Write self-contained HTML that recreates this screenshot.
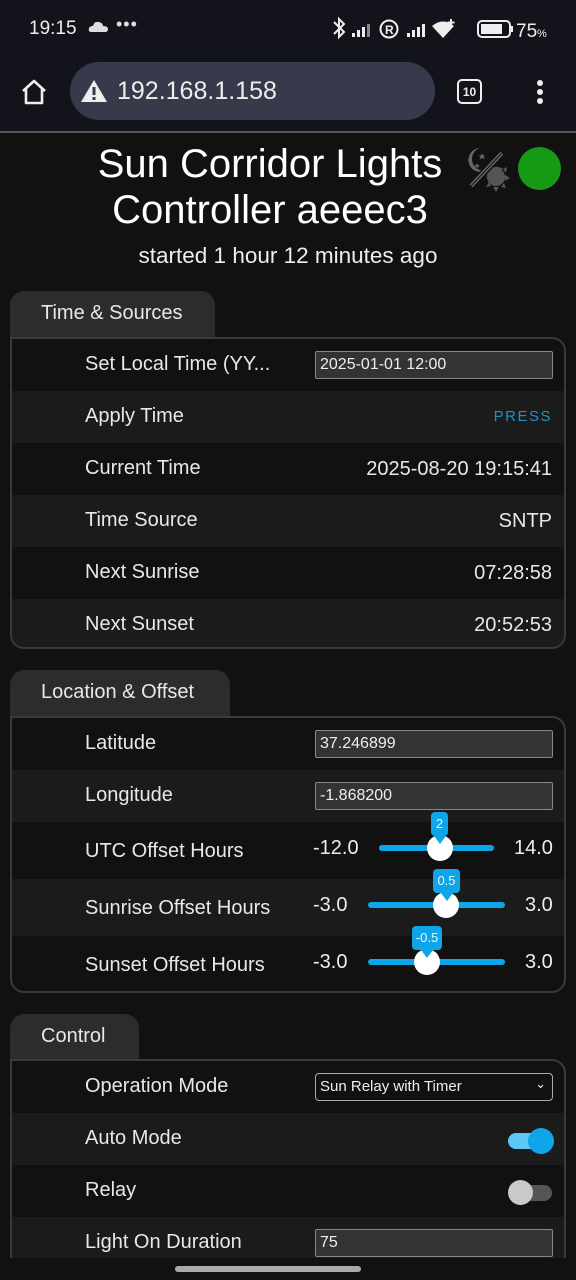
<!DOCTYPE html>
<html style="width:576px;height:1280px;overflow:hidden"><head><meta charset="utf-8"><style>
*{margin:0;padding:0;box-sizing:border-box}
body{width:576px;height:1280px;background:#111;font-family:"Liberation Sans",sans-serif;color:#eee;position:relative;overflow:hidden}
.a{position:absolute}
.sb{left:0;top:0;width:576px;height:132px;background:#13141b}
.lbl{position:absolute;left:85px;font-size:20px;color:#e8e8e8}
.val{position:absolute;right:24px;font-size:20px;color:#e8e8e8}
.tab{position:absolute;left:10px;height:47px;background:#2c2c2c;border-radius:14px 14px 0 0;font-size:20px;color:#e8e8e8;padding:11px 0 0 31px}
.card{position:absolute;left:10px;width:556px;border:2px solid #3a3a3a;border-radius:0 14px 14px 14px;overflow:hidden}
.row{position:relative;height:52px}
.row.alt{background:#1b1b1b}
.row .lbl{top:14px;left:73px}
.row .val{right:12px;top:15px}
.inp{position:absolute;left:303px;width:238px;height:28px;top:12px;background:#333;border:1px solid #888;border-radius:2px;font-size:16px;color:#eee;padding:4px 0 0 4px}
.trk{position:absolute;height:6px;background:#0ea5e9;border-radius:3px}
.th{position:absolute;width:26px;height:26px;border-radius:50%;background:#fff}
.bub{position:absolute;height:24px;background:#0ea5e9;border-radius:4px;font-size:13px;color:#e8f6ff;text-align:center;padding-top:4px}
.bub:after{content:"";position:absolute;left:50%;margin-left:-6px;bottom:-8px;border:6px solid transparent;border-top:8px solid #0ea5e9;border-bottom:0}
</style></head><body>
<div class="a sb"></div>
<div class="a" style="left:29px;top:18px;font-size:19px;color:#eee">19:15</div>
<svg class="a" style="left:88px;top:20px" width="22" height="14"><path d="M3 12 Q0 12 1 8 Q2 6 5 6 Q6 1 11 2 Q15 3 15 6 Q20 6 20 9 Q20 12 17 12Z" fill="#ddd"/></svg>
<div class="a" style="left:116px;top:14px;font-size:18px;color:#ddd;letter-spacing:1px">•••</div>
<svg class="a" style="left:330px;top:16px" width="222" height="24">
<path d="M4 6 L14 16 L9 21 L9 3 L14 8 L4 18" stroke="#eee" stroke-width="2" fill="none"/>
<g fill="#eee"><rect x="22" y="17" width="3" height="4"/><rect x="27" y="14" width="3" height="7"/><rect x="32" y="11" width="3" height="10"/><rect x="37" y="8" width="3" height="13" fill="#888"/></g>
<circle cx="59" cy="13" r="8.5" stroke="#eee" stroke-width="2" fill="none"/><text x="55" y="18" font-size="12" fill="#eee" font-family="Liberation Sans" font-weight="bold">R</text>
<g fill="#eee"><rect x="77" y="17" width="3" height="4"/><rect x="82" y="14" width="3" height="7"/><rect x="87" y="11" width="3" height="10"/><rect x="92" y="8" width="3" height="13"/></g>
<path d="M102 10 Q113 1 124 10 L113 22Z" fill="#eee"/><path d="M121 3 v7 M117.5 6.5 h7" stroke="#eee" stroke-width="2"/>
<rect x="148" y="5" width="32" height="16" rx="4" stroke="#eee" stroke-width="2" fill="none"/><rect x="151" y="8" width="21" height="10" fill="#eee"/><rect x="181" y="10" width="2" height="6" fill="#eee"/>
<text x="186" y="21" font-size="19" fill="#eee" font-family="Liberation Sans">75</text><text x="207" y="21" font-size="11" fill="#eee" font-family="Liberation Sans">%</text>
</svg>
<svg class="a" style="left:20px;top:78px" width="30" height="28"><path d="M3 13 L14 3 L25 13 M6 11 V25 H22 V11" stroke="#eee" stroke-width="2.6" fill="none" stroke-linejoin="round"/></svg>
<div class="a" style="left:70px;top:62px;width:365px;height:58px;border-radius:29px;background:#363a4a"></div>
<svg class="a" style="left:80px;top:79px" width="28" height="24"><path d="M14 1 L27 23 H1Z" fill="#eee"/><rect x="12.5" y="8" width="3" height="8" fill="#363a4a"/><rect x="12.5" y="18" width="3" height="3" fill="#363a4a"/></svg>
<div class="a" style="left:117px;top:77px;font-size:25px;color:#eee">192.168.1.158</div>
<div class="a" style="left:457px;top:79px;width:25px;height:25px;border:2.5px solid #eee;border-radius:5px;font-size:12px;font-weight:bold;text-align:center;padding-top:4px;color:#eee">10</div>
<div class="a" style="left:537px;top:80px;width:6px;height:6px;border-radius:50%;background:#eee;box-shadow:0 9px 0 #eee,0 18px 0 #eee"></div>
<div class="a" style="left:0;top:131px;width:576px;height:2px;background:#555"></div>

<div class="a" style="left:0;width:540px;top:141px;text-align:center;font-size:40px;line-height:46px;color:#fff">Sun Corridor Lights<br>Controller aeeec3</div>
<svg class="a" style="left:465px;top:145px" width="48" height="48">
<path d="M15 3 A12 12 0 1 0 22 25 A10 10 0 1 1 15 3Z" fill="#666"/>
<path d="M17 8 l1 2.5 2.5 0 -2 1.5 1 2.5 -2.5 -1.5 -2.5 1.5 1 -2.5 -2 -1.5 2.5 0Z M12 18 l.8 2 2 0 -1.6 1.2 .8 2 -2 -1.2 -2 1.2 .8 -2 -1.6 -1.2 2 0Z" fill="#666"/>
<path d="M22 34 A10 10 0 0 1 38 24 Z" fill="#555"/><circle cx="31" cy="32" r="9" fill="#555"/>
<path d="M45 33 l-5 -3 v6Z M31 47 l-3 -5 h6Z M41 43 l-5 -1 l3 -4Z M42 22 l-4 2 l3 4Z M21 42 l5 -1 l-2 -4Z" fill="#555"/>
<path d="M6 41 L37 8" stroke="#111" stroke-width="7"/><path d="M6 41 L37 8" stroke="#666" stroke-width="4"/><path d="M6 41 L37 8" stroke="#111" stroke-width="1"/></svg>
<div class="a" style="left:518px;top:147px;width:43px;height:43px;border-radius:50%;background:#169a16"></div>
<div class="a" style="left:0;width:576px;top:243px;text-align:center;font-size:22.5px;color:#eee">started 1 hour 12 minutes ago</div>

<div class="tab" style="top:291px;width:205px">Time &amp; Sources</div>
<div class="card" style="top:337px;height:312px">
<div class="row"><span class="lbl">Set Local Time (YY...</span><div class="inp">2025-01-01 12:00</div></div>
<div class="row alt"><span class="lbl">Apply Time</span><span class="val" style="font-size:15px;color:#1e90c8;letter-spacing:1.5px;top:17px">PRESS</span></div>
<div class="row"><span class="lbl">Current Time</span><span class="val">2025-08-20 19:15:41</span></div>
<div class="row alt"><span class="lbl">Time Source</span><span class="val">SNTP</span></div>
<div class="row"><span class="lbl">Next Sunrise</span><span class="val">07:28:58</span></div>
<div class="row alt"><span class="lbl">Next Sunset</span><span class="val">20:52:53</span></div>
</div>

<div class="tab" style="top:670px;width:220px">Location &amp; Offset</div>
<div class="card" style="top:716px;height:277px">
<div class="row"><span class="lbl">Latitude</span><div class="inp">37.246899</div></div>
<div class="row alt"><span class="lbl">Longitude</span><div class="inp">-1.868200</div></div>
<div class="row" style="height:57px"><span class="lbl" style="top:18px">UTC Offset Hours</span></div>
<div class="row alt" style="height:57px"><span class="lbl" style="top:18px">Sunrise Offset Hours</span></div>
<div class="row" style="height:57px"><span class="lbl" style="top:18px">Sunset Offset Hours</span></div>
</div>
<div class="a" style="left:313px;top:837px;font-size:20px">-12.0</div><div class="a" style="left:514px;top:837px;font-size:20px">14.0</div>
<div class="trk" style="left:379px;top:845px;width:115px"></div><div class="th" style="left:427px;top:835px"></div>
<div class="bub" style="left:431px;width:17px;top:812px">2</div>
<div class="a" style="left:313px;top:894px;font-size:20px">-3.0</div><div class="a" style="left:525px;top:894px;font-size:20px">3.0</div>
<div class="trk" style="left:368px;top:902px;width:137px"></div><div class="th" style="left:433px;top:892px"></div>
<div class="bub" style="left:433px;width:27px;top:869px">0.5</div>
<div class="a" style="left:313px;top:951px;font-size:20px">-3.0</div><div class="a" style="left:525px;top:951px;font-size:20px">3.0</div>
<div class="trk" style="left:368px;top:959px;width:137px"></div><div class="th" style="left:414px;top:949px"></div>
<div class="bub" style="left:412px;width:30px;top:926px">-0.5</div>

<div class="tab" style="top:1014px;width:129px">Control</div>
<div class="card" style="top:1059px;height:221px;border-bottom:none;border-radius:0 14px 0 0">
<div class="row"><span class="lbl">Operation Mode</span><div class="inp" style="background:#111;border-radius:4px;border-color:#aaa;font-size:15px">Sun Relay with Timer<span style="position:absolute;right:6px;top:2px;font-size:13px">&#8964;</span></div></div>
<div class="row alt"><span class="lbl">Auto Mode</span><div class="a" style="left:496px;top:20px;width:40px;height:16px;border-radius:8px;background:#5bc8f5"></div><div class="a" style="left:516px;top:15px;width:26px;height:26px;border-radius:50%;background:#0ea5e9"></div></div>
<div class="row"><span class="lbl">Relay</span><div class="a" style="left:500px;top:20px;width:40px;height:16px;border-radius:8px;background:#555"></div><div class="a" style="left:496px;top:15px;width:25px;height:25px;border-radius:50%;background:#c8cacc"></div></div>
<div class="row alt"><span class="lbl">Light On Duration</span><div class="inp">75</div></div>
</div>
<div class="a" style="left:0;top:1258px;width:576px;height:22px;background:#111"></div>
<div class="a" style="left:175px;top:1266px;width:186px;height:6px;border-radius:3px;background:#aaa"></div>
</body></html>
